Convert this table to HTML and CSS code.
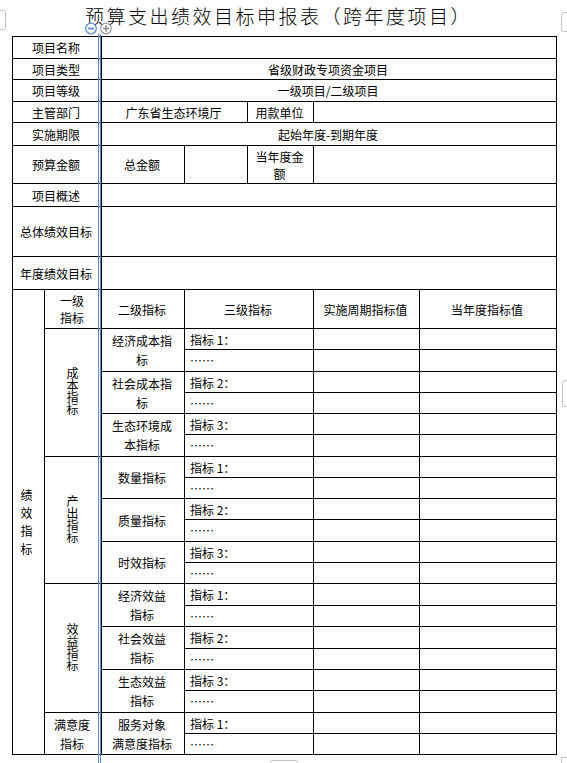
FILE: index.html
```html
<!DOCTYPE html>
<html lang="zh-CN">
<head>
<meta charset="utf-8">
<title>预算支出绩效目标申报表（跨年度项目）</title>
<link rel="stylesheet" href="styles.css">
</head>
<body>
<div class="page">
  <div class="title">预算支出绩效目标申报表（跨年度项目）</div>
  <table class="sheet">
    <colgroup>
      <col class="c-a"><col class="c-b"><col class="c-c"><col class="c-d"><col class="c-e"><col class="c-f"><col class="c-g">
    </colgroup>
    <tbody>
      <tr class="h22"><td colspan="2">项目名称</td><td colspan="5"></td></tr>
      <tr class="h21"><td colspan="2">项目类型</td><td colspan="5">省级财政专项资金项目</td></tr>
      <tr class="h22"><td colspan="2">项目等级</td><td colspan="5">一级项目/二级项目</td></tr>
      <tr class="h21"><td colspan="2">主管部门</td><td colspan="2">广东省生态环境厅</td><td>用款单位</td><td colspan="2"></td></tr>
      <tr class="h23"><td colspan="2">实施期限</td><td colspan="5">起始年度-到期年度</td></tr>
      <tr class="h38"><td colspan="2">预算金额</td><td>总金额</td><td></td><td>当年度金额</td><td colspan="2"></td></tr>
      <tr class="h23"><td colspan="2">项目概述</td><td colspan="5"></td></tr>
      <tr class="h50"><td colspan="2">总体绩效目标</td><td colspan="5"></td></tr>
      <tr class="h33"><td colspan="2">年度绩效目标</td><td colspan="5"></td></tr>
      <tr class="h39">
        <td rowspan="21" class="stack"><div class="stack-text">绩效指标</div></td>
        <td>一级<br>指标</td><td>二级指标</td><td colspan="2">三级指标</td><td>实施周期指标值</td><td>当年度指标值</td>
      </tr>

      <tr class="h21"><td rowspan="6"><span class="vert">成本指标</span></td><td rowspan="2" class="two">经济成本指标</td><td colspan="2" class="left">指标 1：</td><td></td><td></td></tr>
      <tr class="h22"><td colspan="2" class="left">……</td><td></td><td></td></tr>
      <tr class="h21"><td rowspan="2" class="two">社会成本指标</td><td colspan="2" class="left">指标 2：</td><td></td><td></td></tr>
      <tr class="h21"><td colspan="2" class="left">……</td><td></td><td></td></tr>
      <tr class="h21"><td rowspan="2" class="two">生态环境成本指标</td><td colspan="2" class="left">指标 3：</td><td></td><td></td></tr>
      <tr class="h22"><td colspan="2" class="left">……</td><td></td><td></td></tr>

      <tr class="h21"><td rowspan="6"><span class="vert">产出指标</span></td><td rowspan="2" class="two">数量指标</td><td colspan="2" class="left">指标 1：</td><td></td><td></td></tr>
      <tr class="h21"><td colspan="2" class="left">……</td><td></td><td></td></tr>
      <tr class="h21"><td rowspan="2" class="two">质量指标</td><td colspan="2" class="left">指标 2：</td><td></td><td></td></tr>
      <tr class="h22"><td colspan="2" class="left">……</td><td></td><td></td></tr>
      <tr class="h21"><td rowspan="2" class="two">时效指标</td><td colspan="2" class="left">指标 3：</td><td></td><td></td></tr>
      <tr class="h21"><td colspan="2" class="left">……</td><td></td><td></td></tr>

      <tr class="h22"><td rowspan="6"><span class="vert">效益指标</span></td><td rowspan="2" class="two">经济效益<br>指标</td><td colspan="2" class="left">指标 1：</td><td></td><td></td></tr>
      <tr class="h21"><td colspan="2" class="left">……</td><td></td><td></td></tr>
      <tr class="h22"><td rowspan="2" class="two">社会效益<br>指标</td><td colspan="2" class="left">指标 2：</td><td></td><td></td></tr>
      <tr class="h21"><td colspan="2" class="left">……</td><td></td><td></td></tr>
      <tr class="h21"><td rowspan="2" class="two">生态效益<br>指标</td><td colspan="2" class="left">指标 3：</td><td></td><td></td></tr>
      <tr class="h22"><td colspan="2" class="left">……</td><td></td><td></td></tr>

      <tr class="h21"><td rowspan="2" class="two">满意度<br>指标</td><td rowspan="2" class="two">服务对象<br>满意度指标</td><td colspan="2" class="left">指标 1：</td><td></td><td></td></tr>
      <tr class="h21"><td colspan="2" class="left">……</td><td></td><td></td></tr>
    </tbody>
  </table>

  <div class="guide"></div>
  <svg class="knobs" width="28" height="14" viewBox="0 0 28 14" aria-hidden="true">
    <circle cx="6" cy="6.5" r="5.3" fill="#fff" stroke="#5a8bd6" stroke-width="1.3"/>
    <line x1="3" y1="6.5" x2="9" y2="6.5" stroke="#5a8bd6" stroke-width="1.8"/>
    <circle cx="21" cy="6.5" r="5.3" fill="#fff" stroke="#9a9a9a" stroke-width="1.2"/>
    <line x1="18" y1="6.5" x2="24" y2="6.5" stroke="#8a8a8a" stroke-width="1.6"/>
    <line x1="21" y1="3.5" x2="21" y2="9.5" stroke="#8a8a8a" stroke-width="1.6"/>
  </svg>

  <div class="handle h-lt"></div>
  <div class="handle h-rt"></div>
  <div class="handle h-rm"></div>
  <div class="handle h-bm"></div>
  <div class="corner"></div>
</div>
</body>
</html>
```
FILE: styles.css
```css
html, body {
  margin: 0;
  padding: 0;
  background: #fff;
}

body {
  font-family: "Noto Sans CJK SC", "Noto Sans", sans-serif;
  font-size: 12px;
  color: #000;
}

.page {
  position: relative;
  width: 567px;
  height: 763px;
  overflow: hidden;
}

.title {
  padding: 6px 0 0 85px;
  height: 20px;
  font-size: 19px;
  line-height: 20px;
  letter-spacing: 2.5px;
  font-weight: 300;
  white-space: nowrap;
  color: #000;
}

.sheet {
  margin: 10px 0 0 12px;
  border-collapse: collapse;
  table-layout: fixed;
  width: 544px;
}

.c-a { width: 32px; }
.c-b { width: 57px; }
.c-c { width: 83px; }
.c-d { width: 63px; }
.c-e { width: 66px; }
.c-f { width: 106px; }
.c-g { width: 137px; }

.sheet td {
  border: 1px solid #000;
  padding: 0 7px 0 5px;
  text-align: center;
  vertical-align: middle;
  line-height: 17px;
  overflow: hidden;
}

.sheet td.left {
  text-align: left;
  padding-left: 5px;
}

.sheet td.two {
  line-height: 19px;
}

.h21 { height: 21px; }
.h22 { height: 22px; }
.h23 { height: 23px; }
.h33 { height: 33px; }
.h38 { height: 38px; }
.h39 { height: 39px; }
.h50 { height: 50px; }

.sheet td.stack {
  padding: 0 4px 0 0;
}

.stack-text {
  width: 12px;
  margin: 0 auto;
  line-height: 18px;
}

.vert {
  display: inline-block;
  writing-mode: vertical-rl;
  text-orientation: upright;
  line-height: 12px;
}

.guide {
  position: absolute;
  left: 98px;
  top: 34px;
  width: 1px;
  height: 740px;
  border-left: 1px solid #5a8bd6;
  border-right: 1px solid #5a8bd6;
}

.knobs {
  position: absolute;
  left: 85px;
  top: 22px;
}

.handle {
  position: absolute;
  border: 1px solid #c4c4c4;
  border-radius: 3px;
  background: #fff;
}

.h-lt { left: -5px; top: 10px; width: 9px; height: 18px; }
.h-rt { left: 561px; top: 12px; width: 10px; height: 18px; }
.h-rm { left: 562px; top: 380px; width: 10px; height: 25px; }
.h-bm { left: 270px; top: 760px; width: 26px; height: 10px; }

.corner {
  position: absolute;
  left: 561px;
  top: 757px;
  width: 8px;
  height: 8px;
  border-left: 1px solid #c4c4c4;
  border-top: 1px solid #c4c4c4;
}
```
